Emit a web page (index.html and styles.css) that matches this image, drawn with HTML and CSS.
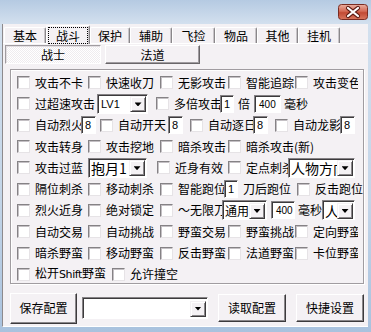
FILE: index.html
```html
<!DOCTYPE html>
<html lang="zh-CN">
<head>
  <meta charset="UTF-8">
  <title>战斗设置</title>
  <link rel="stylesheet" href="styles.css">
</head>
<body>
<div class="win">
  <div class="titlebar">
    <span class="close">
      <svg width="30" height="16" viewBox="0 0 30 16">
        <defs>
          <linearGradient id="cg" x1="0" y1="0" x2="0" y2="1">
            <stop offset="0" stop-color="#eab0a2"/>
            <stop offset="0.45" stop-color="#d46a55"/>
            <stop offset="0.55" stop-color="#c24a34"/>
            <stop offset="1" stop-color="#d9775f"/>
          </linearGradient>
        </defs>
        <rect x="0.5" y="0.5" width="29" height="15" rx="3" fill="url(#cg)" stroke="#7a2c22"/>
        <path d="M10 4 L20 12 M20 4 L10 12" stroke="#5e1c14" stroke-width="4.2" stroke-linecap="round"/>
        <path d="M10 4 L20 12 M20 4 L10 12" stroke="#ffffff" stroke-width="2.2" stroke-linecap="round"/>
      </svg>
    </span>
  </div>

  <div class="client">
    <div class="tabs">
      <span class="tab t42">基本</span>
      <span class="tab on t44"><b>战斗</b></span>
      <span class="tab t40">保护</span>
      <span class="tab t42">辅助</span>
      <span class="tab t43">飞捡</span>
      <span class="tab t42">物品</span>
      <span class="tab t41">其他</span>
      <span class="tab t42">挂机</span>
    </div>

    <div class="panel">
      <div class="subtabs">
        <span class="sub on">战士</span>
        <span class="sub">法道</span>
      </div>

      <div class="group">
        <div class="row">
          <label class="ck a"><i></i><span>攻击不卡</span></label>
          <label class="ck b"><i></i><span>快速收刀</span></label>
          <label class="ck c"><i></i><span>无影攻击</span></label>
          <label class="ck d"><i></i><span>智能追踪</span></label>
          <label class="ck e"><i></i><span>攻击变色</span></label>
        </div>
        <div class="row">
          <label class="ck w80"><i></i><span>过超速攻击</span></label>
          <span class="sel w51"><span class="val lat">LV1</span><span class="drop"></span></span>
          <label class="ck w64 ml8"><i></i><span>多倍攻击</span></label>
          <span class="edit w14">1</span>
          <span class="txt mx4">倍</span>
          <span class="edit w27 sm">400</span>
          <span class="txt ml3">毫秒</span>
        </div>
        <div class="row">
          <label class="ck w64"><i></i><span>自动烈火</span></label>
          <span class="edit w15">8</span>
          <label class="ck w68 ml4"><i></i><span>自动开天</span></label>
          <span class="edit w15">8</span>
          <label class="ck w63 ml7"><i></i><span>自动逐日</span></label>
          <span class="edit w15">8</span>
          <label class="ck w65 ml7"><i></i><span>自动龙影</span></label>
          <span class="edit w15">8</span>
        </div>
        <div class="row">
          <label class="ck a"><i></i><span>攻击转身</span></label>
          <label class="ck b"><i></i><span>攻击挖地</span></label>
          <label class="ck c"><i></i><span>暗杀攻击</span></label>
          <label class="ck"><i></i><span>暗杀攻击(新)</span></label>
        </div>
        <div class="row">
          <label class="ck a"><i></i><span>攻击过蓝</span></label>
          <span class="sel w59"><span class="val">抱月1</span><span class="drop"></span></span>
          <label class="ck a ml10"><i></i><span>近身有效</span></label>
          <label class="ck w60"><i></i><span>定点刺杀</span></label>
          <span class="sel w67"><span class="val">人物方向</span><span class="drop"></span></span>
        </div>
        <div class="row">
          <label class="ck a"><i></i><span>隔位刺杀</span></label>
          <label class="ck b"><i></i><span>移动刺杀</span></label>
          <label class="ck w64"><i></i><span>智能跑位</span></label>
          <span class="edit w14">1</span>
          <span class="txt w54 ml5">刀后跑位</span>
          <label class="ck"><i></i><span>反击跑位</span></label>
        </div>
        <div class="row">
          <label class="ck a"><i></i><span>烈火近身</span></label>
          <label class="ck b"><i></i><span>绝对锁定</span></label>
          <label class="ck w62"><i></i><span>～无限刀</span></label>
          <span class="sel w45"><span class="val s12">通用</span><span class="drop"></span></span>
          <span class="edit w24 ml4 sm">400</span>
          <span class="txt w24 ml3">毫秒</span>
          <span class="sel w33"><span class="val">人物</span><span class="drop"></span></span>
        </div>
        <div class="row">
          <label class="ck a"><i></i><span>自动交易</span></label>
          <label class="ck b"><i></i><span>自动挑战</span></label>
          <label class="ck c"><i></i><span>野蛮交易</span></label>
          <label class="ck d"><i></i><span>野蛮挑战</span></label>
          <label class="ck e"><i></i><span>定向野蛮</span></label>
        </div>
        <div class="row">
          <label class="ck a"><i></i><span>暗杀野蛮</span></label>
          <label class="ck b"><i></i><span>移动野蛮</span></label>
          <label class="ck c"><i></i><span>反击野蛮</span></label>
          <label class="ck d"><i></i><span>法道野蛮</span></label>
          <label class="ck e"><i></i><span>卡位野蛮</span></label>
        </div>
        <div class="row">
          <label class="ck w95"><i></i><span>松开<em>Shift</em>野蛮</span></label>
          <label class="ck"><i></i><span>允许撞空</span></label>
        </div>
      </div>
    </div>

    <div class="footer">
      <button class="btn save">保存配置</button>
      <span class="sel combo"><span class="val"></span><span class="drop"></span></span>
      <button class="btn">读取配置</button>
      <button class="btn">快捷设置</button>
    </div>
  </div>
</div>
</body>
</html>
```

FILE: styles.css
```css
body {
  margin: 0;
  width: 371px;
  height: 332px;
  overflow: hidden;
  font: 12px/14px "Noto Sans CJK SC", "Liberation Sans", sans-serif;
  color: #000;
  background: #f4f1f4;
}

.win {
  height: 332px;
  display: flex;
  flex-direction: column;
  background: linear-gradient(#b5cae2, #d3e0ee 24px, #c3d5e8 200px, #a9c2de);
}

.titlebar {
  height: 24px;
  flex: none;
  display: flex;
  justify-content: flex-end;
  padding-right: 3px;
}

.close {
  margin-top: 4px;
  width: 30px;
  height: 16px;
}

.close svg { display: block; }

.client {
  flex: 1;
  margin: 0 3px 5px 2px;
  border-left: 1px solid #8d8a8d;
  border-bottom: 1px solid #ffffff;
  background: #f4f1f4;
  display: flex;
  flex-direction: column;
}

/* top tabs */
.tabs {
  height: 19px;
  display: flex;
  align-items: flex-end;
  padding-left: 1px;
}

.tab {
  height: 16px;
  box-sizing: border-box;
  display: flex;
  align-items: center;
  justify-content: center;
  border-top: 1px solid #fff;
  border-left: 1px solid #fff;
  border-right: 1px solid #8a878a;
  box-shadow: inset -1px 0 #c8c4c8;
  border-radius: 2px 2px 0 0;
}

.tab.on {
  height: 19px;
  position: relative;
  z-index: 1;
  margin-bottom: -1px;
  background: #f4f1f4;
}

.tab.on b {
  font-weight: normal;
  outline: 1px dotted #000;
  outline-offset: 0;
  padding: 1px 7px 0;
  line-height: 14px;
}

.t40 { width: 40px; }
.t41 { width: 41px; }
.t42 { width: 42px; }
.t43 { width: 43px; }
.t44 { width: 44px; }

.panel {
  border-top: 1px solid #fff;
  flex: none;
}

.subtabs {
  display: flex;
  margin: 1px 0 0 2px;
}

.sub {
  width: 95px;
  height: 19px;
  box-sizing: border-box;
  display: flex;
  align-items: center;
  justify-content: center;
  margin-left: 4px;
  border: 1px solid;
  border-color: #fff #696669 #696669 #fff;
  box-shadow: inset -1px -1px #a09ca0;
}

.sub.on {
  width: 96px;
  margin-left: 0;
  border-color: #a09ca0 #fff #fff #a09ca0;
  box-shadow: inset 1px 1px #e2dee2;
  background: repeating-conic-gradient(#ffffff 0 25%, #efecef 0 50%) 0 0 / 2px 2px;
}

/* group box */
.group {
  margin: 5px 4px 0 7px;
  height: 215px;
  box-sizing: border-box;
  border: 1px solid #a09ca0;
  box-shadow: inset 1px 1px #fff, 1px 1px #fff;
  padding: 2px 0 0 6px;
  overflow: hidden;
}

.row {
  height: 21.3px;
  display: flex;
  align-items: center;
  white-space: nowrap;
}

.ck {
  flex: none;
  display: flex;
  align-items: center;
  overflow: hidden;
}

.ck i {
  flex: none;
  width: 13px;
  height: 13px;
  box-sizing: border-box;
  background: #fff;
  border: 1px solid;
  border-color: #858285 #e6e3e6 #e6e3e6 #858285;
  box-shadow: inset 1px 1px #c4c0c4;
}

.ck span {
  margin-left: 5px;
}

.ck em {
  font-style: normal;
  font-family: "DejaVu Sans", sans-serif;
  font-size: 11px;
  letter-spacing: -0.4px;
}

.a { width: 71px; }
.b { width: 72px; }
.c { width: 68px; }
.d { width: 67px; }
.e { width: 63px; }

.w14 { width: 14px; }
.w15 { width: 15px; }
.w24 { width: 24px; }
.w27 { width: 27px; }
.w33 { width: 33px; }
.w45 { width: 45px; }
.w51 { width: 51px; }
.w54 { width: 54px; }
.w59 { width: 59px; }
.w60 { width: 60px; }
.w62 { width: 62px; }
.w63 { width: 63px; }
.w64 { width: 64px; }
.w65 { width: 65px; }
.w67 { width: 67px; }
.w68 { width: 68px; }
.w80 { width: 80px; }
.w95 { width: 95px; }

.ml3 { margin-left: 3px; }
.ml4 { margin-left: 4px; }
.ml5 { margin-left: 5px; }
.ml7 { margin-left: 7px; }
.ml8 { margin-left: 8px; }
.ml10 { margin-left: 10px; }
.mx4 { margin: 0 4px; }

.txt { flex: none; }

/* edit boxes */
.edit {
  flex: none;
  height: 18px;
  box-sizing: border-box;
  background: #fff;
  border: 1px solid;
  border-color: #858285 #fff #fff #858285;
  box-shadow: inset 1px 1px #3c3a3c;
  padding: 1px 0 0 3px;
  font: 11px/15px "Liberation Sans", sans-serif;
  overflow: hidden;
}

.edit.sm {
  font-size: 10px;
  padding-left: 4px;
}

/* drop-down lists */
.sel {
  flex: none;
  height: 20px;
  box-sizing: border-box;
  background: #fff;
  border: 1px solid;
  border-color: #858285 #fff #fff #858285;
  box-shadow: inset 1px 1px #3c3a3c;
  display: flex;
  align-items: center;
  padding: 1px 1px 0 2px;
  overflow: hidden;
}

.sel .val {
  flex: 1;
  overflow: hidden;
  white-space: nowrap;
  font-size: 14px;
  line-height: 16px;
}

.sel .s12 {
  font-size: 12px;
}

.sel .lat {
  font: 11px "Liberation Sans", sans-serif;
  padding-left: 1px;
}

.drop {
  flex: none;
  width: 16px;
  height: 16px;
  box-sizing: border-box;
  background: #f4f1f4;
  border: 1px solid;
  border-color: #f4f1f4 #3c3a3c #3c3a3c #f4f1f4;
  box-shadow: inset 1px 1px #fff, inset -1px -1px #8a878a;
  display: flex;
  align-items: center;
  justify-content: center;
}

.drop::after {
  content: "";
  width: 7px;
  height: 4px;
  background: #000;
  clip-path: polygon(0 0, 100% 0, 50% 100%);
}

/* bottom bar */
.footer {
  flex: 1;
  display: flex;
  align-items: center;
  padding: 6px 0 0 7px;
}

.btn {
  flex: none;
  width: 68px;
  height: 28px;
  margin-left: 10px;
  padding: 0;
  background: #f4f1f4;
  border: 1px solid;
  border-color: #fff #3c3a3c #3c3a3c #fff;
  box-shadow: inset -1px -1px #8a878a;
  font: 12px/14px "Noto Sans CJK SC", sans-serif;
  color: #000;
}

.btn.save {
  width: 67px;
  height: 31px;
  margin-left: 0;
}

.combo {
  width: 126px;
  height: 22px;
  margin-left: 5px;
}
```
